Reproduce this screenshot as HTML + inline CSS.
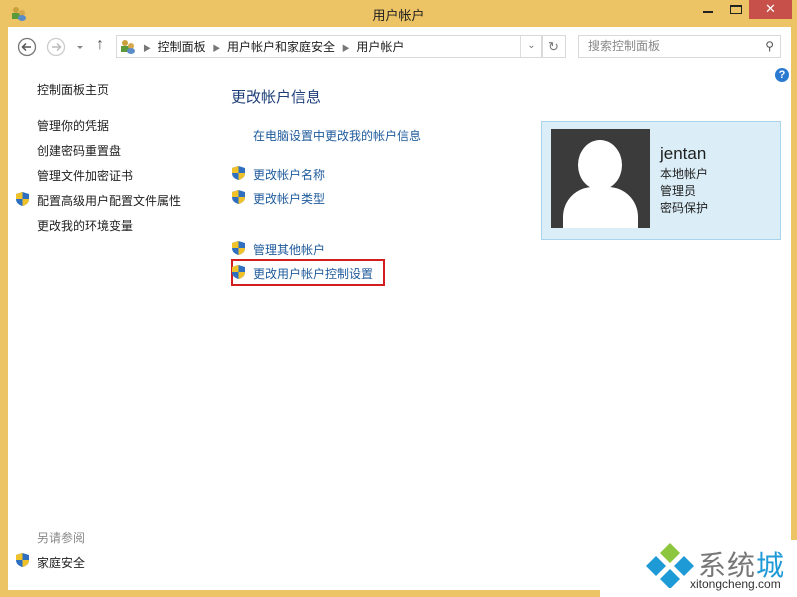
<!DOCTYPE html><html><head><meta charset="utf-8"><style>
body{margin:0;width:797px;height:597px;background:#ecc466;position:relative;overflow:hidden;font-family:"Liberation Sans","Noto Sans CJK SC",sans-serif;font-size:12px;color:#1e1e1e}
.a{position:absolute}
.lk{color:#1e5a9c}
.ll{color:#1e1e1e}
.sh{position:absolute;width:13px;height:14px}
</style></head><body>
<div class="a" style="left:8px;top:27px;width:783px;height:563px;background:#fff"></div>
<div class="a" style="left:0;width:797px;text-align:center;font-size:13px;top:5px">用户帐户</div>
<svg class="a" style="left:10px;top:5px" width="18" height="16"><circle cx="6" cy="5" r="3" fill="#c9a03c"/><rect x="2" y="8" width="8" height="6" fill="#5a9a3a"/><circle cx="12" cy="8" r="3" fill="#d6a84c"/><ellipse cx="12" cy="13" rx="4" ry="3" fill="#5a8cc8"/></svg>
<div class="a" style="left:703px;top:11px;width:10px;height:2px;background:#222"></div>
<div class="a" style="left:730px;top:5px;width:10px;height:6px;border:1px solid #222;border-top-width:2px"></div>
<div class="a" style="left:749px;top:0;width:43px;height:19px;background:#c7504a;color:#fff;text-align:center;font-size:13px;line-height:18px">✕</div>
<svg class="a" style="left:17px;top:37px" width="70" height="20"><circle cx="10" cy="10" r="8.5" fill="none" stroke="#777" stroke-width="1.3"/><path d="M14 10H6M9 6.5 5.5 10 9 13.5" stroke="#555" stroke-width="1.5" fill="none"/><circle cx="39" cy="10" r="8.5" fill="none" stroke="#ccc" stroke-width="1.3"/><path d="M35 10h8M40 6.5 43.5 10 40 13.5" stroke="#bbb" stroke-width="1.5" fill="none"/><path d="M60 9l3 3 3-3z" fill="#888"/></svg>
<div class="a" style="left:96px;top:36px;font-size:16px;color:#555">↑</div>
<div class="a" style="left:116px;top:35px;width:425px;height:21px;border:1px solid #d9d9d9"></div>
<svg class="a" style="left:119px;top:38px" width="18" height="16"><circle cx="6" cy="5" r="3" fill="#c9a03c"/><rect x="2" y="8" width="8" height="6" fill="#5a9a3a"/><circle cx="12" cy="8" r="3" fill="#d6a84c"/><ellipse cx="12" cy="13" rx="4" ry="3" fill="#5a8cc8"/></svg>
<div class="a" style="left:143px;top:38px;white-space:pre;font-size:12px"><span style="color:#777;font-size:8px">▶</span>  控制面板  <span style="color:#777;font-size:8px">▶</span>  用户帐户和家庭安全  <span style="color:#777;font-size:8px">▶</span>  用户帐户</div>
<div class="a" style="left:520px;top:36px;width:21px;height:21px;border-left:1px solid #ddd;color:#777;text-align:center;line-height:20px;font-size:10px">⌄</div>
<div class="a" style="left:541px;top:35px;width:23px;height:21px;border:1px solid #d9d9d9;color:#777;text-align:center;line-height:21px;font-size:13px">↻</div>
<div class="a" style="left:578px;top:35px;width:201px;height:21px;border:1px solid #d9d9d9;color:#888;line-height:21px;text-indent:9px">搜索控制面板<span style="position:absolute;right:6px;color:#555">⚲</span></div>
<div class="a" style="left:775px;top:68px;width:14px;height:14px;border-radius:50%;background:#2a7ad0;color:#fff;font-weight:bold;font-size:11px;text-align:center;line-height:14px">?</div>
<div class="a ll" style="left:37px;top:81px">控制面板主页</div>
<div class="a ll" style="left:37px;top:117px">管理你的凭据</div>
<div class="a ll" style="left:37px;top:142px">创建密码重置盘</div>
<div class="a ll" style="left:37px;top:167px">管理文件加密证书</div>
<div class="a ll" style="left:37px;top:192px">配置高级用户配置文件属性</div>
<div class="a ll" style="left:37px;top:217px">更改我的环境变量</div>
<div class="a" style="left:37px;top:529px;color:#888">另请参阅</div>
<div class="a ll" style="left:37px;top:554px">家庭安全</div>
<div class="a" style="left:231px;top:86px;font-size:15px;color:#1e3f7a">更改帐户信息</div>
<div class="a lk" style="left:253px;top:127px">在电脑设置中更改我的帐户信息</div>
<div class="a lk" style="left:253px;top:166px">更改帐户名称</div>
<div class="a lk" style="left:253px;top:190px">更改帐户类型</div>
<div class="a lk" style="left:253px;top:241px">管理其他帐户</div>
<div class="a lk" style="left:253px;top:265px">更改用户帐户控制设置</div>
<div class="a" style="left:231px;top:259px;width:150px;height:23px;border:2px solid #d21e1e"></div>
<svg width="0" height="0" style="position:absolute"><defs><g id="s"><path d="M6.5 0 13 2v5c0 4-3 6-6.5 7C3 13 0 11 0 7V2z" fill="#2f6fc0"/><path d="M6.5 0V7H0V2zM6.5 7H13c0 4-3 6-6.5 7z" fill="#f0c22a"/></g></defs></svg>
<svg class="sh" style="left:16px;top:192px"><use href="#s"/></svg>
<svg class="sh" style="left:16px;top:553px"><use href="#s"/></svg>
<svg class="sh" style="left:232px;top:166px"><use href="#s"/></svg>
<svg class="sh" style="left:232px;top:190px"><use href="#s"/></svg>
<svg class="sh" style="left:232px;top:241px"><use href="#s"/></svg>
<svg class="sh" style="left:232px;top:265px"><use href="#s"/></svg>
<div class="a" style="left:541px;top:121px;width:238px;height:117px;background:#dbeef7;border:1px solid #a9d4ec"></div>
<div class="a" style="left:551px;top:129px;width:99px;height:99px;background:#3b3b3b;overflow:hidden"><div class="a" style="left:27px;top:11px;width:44px;height:50px;border-radius:50%;background:#fff"></div><div class="a" style="left:12px;top:58px;width:75px;height:60px;border-radius:30px 30px 0 0;background:#fff"></div></div>
<div class="a" style="left:660px;top:144px;font-size:17px">jentan</div>
<div class="a" style="left:660px;top:165px">本地帐户</div>
<div class="a" style="left:660px;top:182px">管理员</div>
<div class="a" style="left:660px;top:199px">密码保护</div>
<div class="a" style="left:600px;top:540px;width:197px;height:57px;background:#fff"></div>
<svg class="a" style="left:643px;top:542px" width="54" height="46"><path d="M27 1 37 11 27 21 17 11z" fill="#8cc63f"/><path d="M13 14 23 24 13 34 3 24z" fill="#1e9ad6"/><path d="M41 14 51 24 41 34 31 24z" fill="#1e9ad6"/><path d="M27 27 37 37 27 47 17 37z" fill="#1e9ad6"/></svg>
<div class="a" style="left:698px;top:544px;font-size:28px;color:#777;letter-spacing:1px">系统<span style="color:#1e9ad6">城</span></div>
<div class="a" style="left:690px;top:577px;font-size:12px;color:#333">xitongcheng.com</div>
</body></html>
